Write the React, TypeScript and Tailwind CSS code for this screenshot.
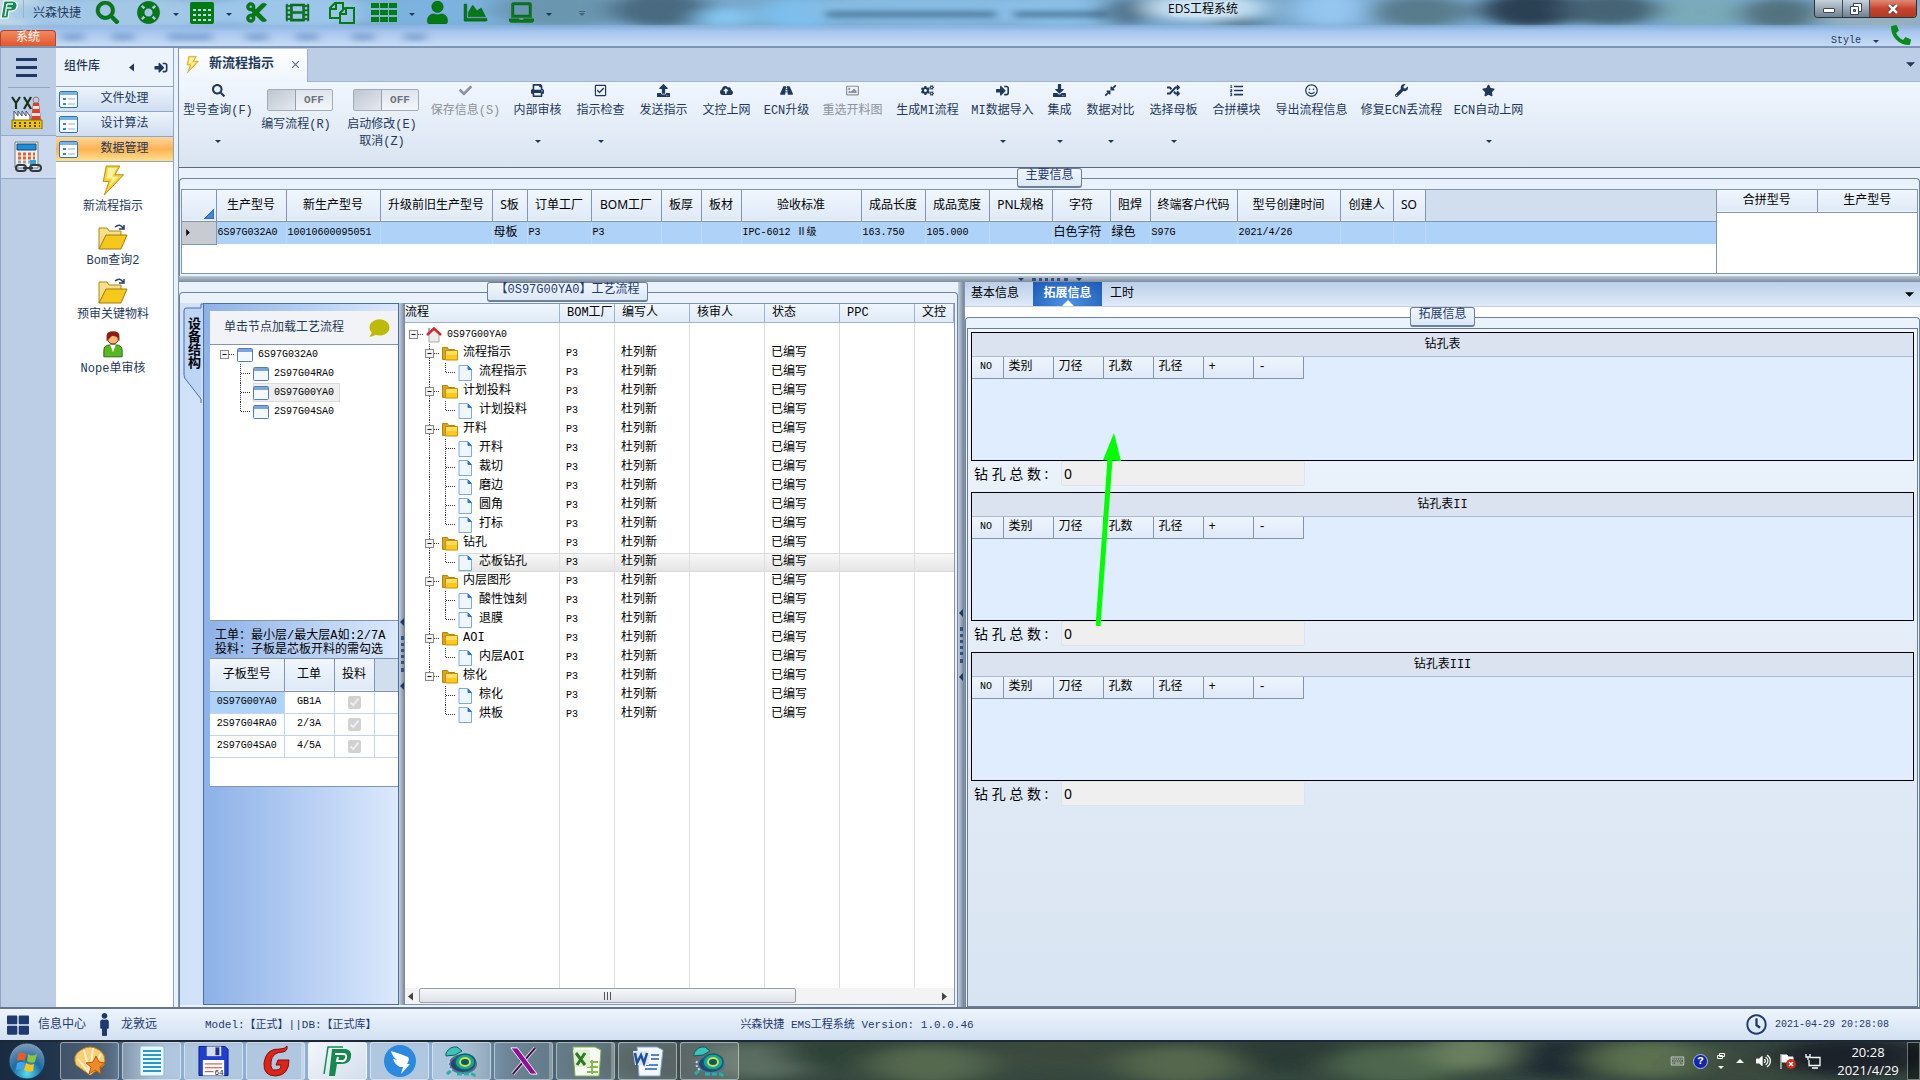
import React, { useState } from 'react';
import type { IconType } from 'react-icons';
import {
    FaSearch, FaLifeRing, FaCut, FaFilm, FaRegCopy, FaTh, FaUser, FaChartArea, FaLaptop, FaPhone,
    FaCheck, FaPrint, FaRegCheckSquare, FaUpload, FaCloudUploadAlt, FaRoad, FaRegImage, FaCogs, FaSignInAlt,
    FaDownload, FaCompressAlt, FaRandom, FaListOl, FaRegSmile, FaWrench, FaStar, FaComment, FaThLarge, FaMale,
    FaRegClock, FaRegKeyboard, FaVolumeUp,
} from 'react-icons/fa';

const Caret: React.FC<{ className?: string }> = ({ className = '' }) => (
    <svg viewBox="0 0 8 4" className={`w-[6px] h-[3px] fill-current shrink-0 ${className}`}><path d="M0 0h8L4 4z" /></svg>
);

/* ---------- title bar ---------- */

const GridIcon: React.FC<{ className?: string }> = () => (
    <svg viewBox="0 0 24 22" className="w-[24px] h-[22px]" aria-hidden="true">
        <rect width="24" height="22" rx="2" fill="currentColor" />
        <path d="M3 7h3v2H3zM8 7h3v2H8zM13 7h3v2h-3zM18 7h3v2h-3zM3 12h3v2H3zM8 12h3v2H8zM13 12h3v2h-3zM18 12h3v2h-3zM3 17h3v2H3zM8 17h3v2H8zM13 17h3v2h-3zM18 17h3v2h-3z" fill="#b9d6ee" />
    </svg>
);

// Two overlapping sheets with cut corners.
const SheetsIcon: React.FC<{ className?: string }> = () => (
    <svg viewBox="0 0 26 23" className="w-[26px] h-[23px]" fill="none" stroke="currentColor" strokeWidth="2" aria-hidden="true">
        <path d="M11 17H1V7l5-5h8v6M1 8h6V2" />
        <path d="M11 12l5-5h9v15H11zM11 13h6V7" />
    </svg>
);

const BarsIcon: React.FC<{ className?: string }> = () => (
    <svg viewBox="0 0 26 20" className="w-[26px] h-[20px]" fill="currentColor" aria-hidden="true">
        <path d="M0 0h8v5H0zM9 0h8v5H9zM18 0h8v5h-8zM0 7h8v5H0zM9 7h8v5H9zM18 7h8v5h-8zM0 14h8v5H0zM9 14h8v5H9zM18 14h8v5h-8z" />
    </svg>
);

const quickTools: { icon: React.ComponentType<{ className?: string }>, label: string, width: string, caret?: boolean }[] = [
    { icon: FaSearch, label: '查找', width: 'w-[41px]' },
    { icon: FaLifeRing, label: '帮助', width: 'w-[54px]', caret: true },
    { icon: GridIcon, label: '表格', width: 'w-[54px]', caret: true },
    { icon: FaCut, label: '剪切', width: 'w-[41px]' },
    { icon: FaFilm, label: '胶片', width: 'w-[44px]' },
    { icon: SheetsIcon, label: '复制', width: 'w-[42px]' },
    { icon: BarsIcon, label: '列表', width: 'w-[54px]', caret: true },
    { icon: FaUser, label: '用户', width: 'w-[38px]' },
    { icon: FaChartArea, label: '图表', width: 'w-[46px]' },
    { icon: FaLaptop, label: '终端', width: 'w-[54px]', caret: true },
];

const glassBlobs = [
    [15, 12, 45, 18, '#cfe1ea'], [120, 14, 120, 18, '#a3c8e6'], [290, 12, 90, 18, '#9cc6ea'], [440, 12, 80, 18, '#7cb2de'],
    [560, 10, 70, 18, '#6a96b0'], [660, 10, 50, 18, '#4a6b80'], [724, 18, 26, 10, '#86c8f2'], [800, 14, 40, 16, '#7cc0ee'],
    [930, 10, 130, 16, '#86bbe2'], [1060, 12, 70, 16, '#8abfe6'], [1125, 12, 24, 14, '#4d6f88'], [1205, 8, 60, 14, '#c4dff2'],
    [1240, 24, 26, 5, '#55788f'], [1330, 10, 36, 18, '#94c6f0'], [1420, 12, 50, 16, '#587c8c'], [1530, 10, 50, 18, '#2a4152'],
    [1610, 10, 50, 16, '#456474'], [1700, 12, 40, 16, '#7aaab8'], [1780, 14, 40, 16, '#527280'], [1880, 18, 60, 16, '#94b0bf'],
] as const;

const Glass: React.FC = () => (
    <svg className="absolute inset-0 w-full h-full" viewBox="0 0 1920 48" preserveAspectRatio="none" aria-hidden="true">
        <defs>
            <filter id="glass" x="-20%" y="-80%" width="140%" height="260%"><feGaussianBlur stdDeviation="14 4" /></filter>
            <filter id="words" x="-20%" y="-80%" width="140%" height="260%"><feGaussianBlur stdDeviation="5 2" /></filter>
            <linearGradient id="glassLow" x1="0" x2="0" y1="0" y2="1">
                <stop offset="0" stopColor="#8fb6e6" stopOpacity="0.5" />
                <stop offset="0.3" stopColor="#a6c5ee" />
                <stop offset="1" stopColor="#c8dcf4" />
            </linearGradient>
        </defs>
        <rect width="1920" height="48" fill="#79a8cc" />
        <g filter="url(#glass)">
            {glassBlobs.map(([x, y, rx, ry, fill], i) => <ellipse key={i} cx={x} cy={y} rx={rx} ry={ry} fill={fill} />)}
        </g>
        <rect y="26" width="1920" height="22" fill="url(#glassLow)" />
        <g filter="url(#words)" fill="#4a78b4" opacity="0.4">
            <rect x="62" y="34" width="22" height="9" />
            <rect x="112" y="34" width="22" height="9" />
            <rect x="168" y="34" width="44" height="9" />
            <rect x="246" y="34" width="22" height="9" />
            <rect x="296" y="34" width="22" height="9" />
            <rect x="352" y="34" width="22" height="9" />
            <rect x="404" y="34" width="22" height="9" />
            <rect x="826" y="11" width="170" height="8" fill="#1e3f60" />
            <rect x="1014" y="11" width="94" height="8" fill="#1e3f60" />
        </g>
    </svg>
);

const FLogo: React.FC<{ className?: string }> = ({ className }) => (
    <svg viewBox="0 0 18 20" className={className} aria-hidden="true">
        <path d="M4 1h9q5 1 4 6-1 4-6 4H9l-1 7H1z" fill="#168a55" stroke="#fff" strokeWidth="1.200" />
        <path d="M7 4h6M7 4L5 16M6.500 8h5" stroke="#e7f6ee" strokeWidth="1.500" fill="none" />
    </svg>
);

const TitleBar: React.FC = () => (
    <header className="relative h-[48px] shrink-0 flex border-b-2 border-[#7b93b5] overflow-hidden">
        <Glass />
        <div className="relative w-1/2 min-w-0">
            <div className="h-[30px] flex items-start">
                <FLogo className="w-[18px] h-[20px]" />
                <span className="w-px h-[18px] mx-[5px] bg-[#9db3c4]" />
                <span className="w-[60px] pl-1 pt-[6px] text-[#1e395b]">兴森快捷</span>
                <div className="pl-[6px] flex text-[#047a12]">
                    {quickTools.map(({ icon: Icon, label, width, caret }) => (
                        <button key={label} aria-label={label} className={`${width} h-[25px] flex items-center justify-start gap-3`}>
                            <Icon className="w-[25px] h-[23px] stroke-[#0a3d10] stroke-[8px]" />
                            {caret && <Caret className="mt-1 text-[#1e395b]" />}
                        </button>
                    ))}
                    <span className="h-[26px] pl-4 flex flex-col justify-center gap-px text-[#44617f]">
                        <span className="w-[6px] h-px bg-current" />
                        <Caret />
                    </span>
                </div>
            </div>
            <button className="block w-[56px] h-[16px] rounded-t-sm border border-b-0 border-[#b1442a] bg-linear-to-b from-[#f08a62] to-[#e2552a] leading-[15px] text-white">系统</button>
        </div>
        <div className="relative w-1/2 min-w-0 pl-[208px] pt-[1px] text-black">
            <div className="w-fit font-['Open_Sans','Noto_Sans_CJK_SC',sans-serif] bg-white/20 rounded-full">EDS工程系统</div>
        </div>
        <div className="absolute right-[3px] top-0 flex h-[18px] rounded-b border border-t-0 border-[#26323e] overflow-hidden">
            <button aria-label="最小化" className="w-[28px] flex items-center justify-center border-r border-[#3d4b59] bg-linear-to-b from-[#c8d3de] to-[#71818f]">
                <span className="w-[12px] h-[5px] mt-1 rounded-[1px] border border-[#3c4754] bg-white" />
            </button>
            <button aria-label="还原" className="w-[27px] flex items-center justify-center border-r border-[#3d4b59] bg-linear-to-b from-[#c8d3de] to-[#71818f]">
                <svg viewBox="0 0 12 12" className="w-[12px] h-[12px]" fill="#fff" stroke="#3c4754"><path d="M3.500.5h8v8h-8z" /><path d="M.5 3.500h8v8h-8z" /><path d="M3.500 6.500h2v2h-2z" fill="#75838f" /></svg>
            </button>
            <button aria-label="关闭" className="w-[46px] flex items-center justify-center bg-linear-to-b from-[#dd8b76] via-[#c8432c] to-[#b03a22]">
                <svg viewBox="0 0 12 10" className="w-[12px] h-[10px]" fill="none"><path d="M2 1l8 8M10 1L2 9" stroke="#4c2a28" strokeWidth="4" /><path d="M2 1l8 8M10 1L2 9" stroke="#fff" strokeWidth="2.500" /></svg>
            </button>
        </div>
        <div className="absolute right-[9px] bottom-0 flex items-center h-[22px] gap-3 text-[#1e395b]">
            <button className="pt-3 flex items-center gap-3 text-[10px] leading-[10px]">Style <Caret /></button>
            <FaPhone className="w-[20px] h-[20px] text-[#0a8a1a] -scale-x-100" />
        </div>
    </header>
);

/* ---------- left side ---------- */

const Factory: React.FC = () => (
    <svg viewBox="0 0 32 34" className="w-[32px] h-[34px]" aria-hidden="true">
        <path d="M1 2l4 6v6M9 2L5 8M13 2l7 12M20 2l-7 12" stroke="#16331c" strokeWidth="2.200" fill="none" />
        <path d="M22 8h6l2 18H20z" fill="#d8402c" />
        <path d="M22 11h6v3h-6zM21 18h8v3h-8z" fill="#f4e3dc" />
        <circle cx="25" cy="5" r="3" fill="#c9ccd4" stroke="#7c8490" />
        <path d="M3 26V16l4 5v-5l4 5v-5l4 5v-5l4 5v5z" fill="#fff" stroke="#44506a" />
        <path d="M1 25h30v9H1z" fill="#edc40c" stroke="#8b6a00" />
        <path d="M3 28h26M3 31h26" stroke="#5d4700" strokeWidth="2" strokeDasharray="2 3" />
    </svg>
);

const Calculator: React.FC = () => (
    <svg viewBox="0 0 30 32" className="w-[30px] h-[32px]" aria-hidden="true">
        <path d="M3 1h23v26H3z" fill="#f1f1f1" stroke="#767c86" />
        <path d="M5 3h19v6H5z" fill="#1c8fd6" stroke="#0d4a77" />
        <path d="M6 13h17M6 17h17" stroke="#e2602c" strokeWidth="3" strokeDasharray="3 2" />
        <path d="M6 21h17" stroke="#9aa3ad" strokeWidth="3" strokeDasharray="3 2" />
        <path d="M18 19h6v6h-6z" fill="#2fa6e4" />
        <g fill="none" stroke="#33383e" strokeWidth="2"><rect x="4" y="24" width="10" height="6" rx="3" /><rect x="18" y="24" width="11" height="6" rx="3" /><path d="M11 27h10" /></g>
    </svg>
);

const Bolt: React.FC<{ className?: string }> = ({ className }) => (
    <svg viewBox="0 0 24 32" className={className} aria-hidden="true">
        <path d="M5 1h14l-5 9h9L3 31l5-14H2z" fill="#fbd22c" stroke="#b58a1c" />
        <path d="M7 3h9l-5 9h7L8 22l3-8H5z" fill="#fff2a6" />
    </svg>
);

const OpenFolder: React.FC = () => (
    <svg viewBox="0 0 30 26" className="w-[30px] h-[26px]" aria-hidden="true">
        <path d="M1 25V4h8l2 3h12v4" fill="#f8e08a" stroke="#a98619" />
        <path d="M1 25L8 11h21l-6 14z" fill="#f7c81c" stroke="#9c7a10" />
        <path d="M17 3q5-4 8 1m1-3v4h-5" fill="none" stroke="#2a3d66" strokeWidth="1.500" />
    </svg>
);

const Person: React.FC = () => (
    <svg viewBox="0 0 24 30" className="w-[22px] h-[28px]" aria-hidden="true">
        <path d="M2 29v-7q0-6 7-6h6q7 0 7 6v7z" fill="#58b820" stroke="#27640a" />
        <path d="M9 16l3 8 3-8z" fill="#fff" />
        <circle cx="12" cy="9" r="6" fill="#f3b878" stroke="#5c1a08" />
        <path d="M5 12V6q0-5 7-5t7 5v6l-3-5-5-1-3 3z" fill="#8e1d0e" />
    </svg>
);

const FormIcon: React.FC = () => (
    <svg viewBox="0 0 19 17" className="w-[19px] h-[17px] shrink-0" aria-hidden="true">
        <rect x=".5" y=".5" width="18" height="16" rx="1.500" fill="#fff" stroke="#2b72b8" />
        <path d="M1 1h17v3H1z" fill="#78b3e6" />
        <path d="M4 7h3v2H4zM4 12h3v2H4z" fill="#3d86c6" />
        <path d="M9 7h7v2H9zM9 12h7v2H9z" fill="#c3d7ea" />
    </svg>
);

const SideRail: React.FC = () => (
    <nav className="w-[56px] shrink-0 border-l border-[#8ea5c6] bg-[#bccde6] flex flex-col items-center">
        <button aria-label="菜单" className="h-[40px] w-[42px] pl-[8px] pr-[13px] border-b border-[#8ea5c6] flex flex-col justify-center gap-[5px]">
            <span className="h-[3px] bg-[#1f3763]" /><span className="h-[3px] bg-[#1f3763]" /><span className="h-[3px] bg-[#1f3763]" />
        </button>
        <button aria-label="YX 工厂" className="h-[48px] w-full pr-[3px] flex items-center justify-center border-b border-[#94aacb]"><Factory /></button>
        <button aria-label="计算" className="h-[43px] w-full pr-[3px] flex items-center justify-center border-b border-[#94aacb] bg-[#cddaed]"><Calculator /></button>
    </nav>
);

const libraryGroups = ['文件处理', '设计算法', '数据管理'];
const libraryItems = [
    { label: '新流程指示', icon: <Bolt className="w-[24px] h-[31px]" /> },
    { label: 'Bom查询2', icon: <OpenFolder /> },
    { label: '预审关键物料', icon: <OpenFolder /> },
    { label: 'Nope单审核', icon: <Person /> },
];

const Library: React.FC = () => {
    const [active, setActive] = useState('数据管理');
    return (
        <aside className="w-[118px] shrink-0 flex flex-col border-r border-[#8ea5c6] bg-white text-[#1e395b]">
            <div className="h-[38px] shrink-0 px-2 pr-[5px] flex items-center bg-[#edf3fb] font-medium">
                <span className="flex-1">组件库</span>
                <svg viewBox="0 0 5 8" className="w-[5px] h-[9px] mr-5 fill-current"><path d="M5 0v8L0 4z" /></svg>
                <FaSignInAlt className="w-[14px] h-[13px]" />
            </div>
            {libraryGroups.map(group => (
                <button
                    key={group}
                    onClick={() => setActive(group)}
                    className={`h-[25px] shrink-0 pl-[3px] flex items-center border-t border-[#8ea5c6] ${group === active ? 'bg-linear-to-b from-[#fcd79c] via-[#fdb251] to-[#fee18e]' : 'bg-linear-to-b from-[#edf4fc] to-[#cfdef0]'}`}
                >
                    <FormIcon />
                    <span className="flex-1 pr-[2px]">{group}</span>
                </button>
            ))}
            <div className="flex-1 border-t border-[#8ea5c6] pr-[3px]">
                {libraryItems.map(item => (
                    <button key={item.label} className="w-full h-[54px] flex flex-col items-center justify-end">
                        {item.icon}
                        <span className="leading-[18px] mt-[2px]">{item.label}</span>
                    </button>
                ))}
            </div>
        </aside>
    );
};

/* ---------- ribbon ---------- */

type Tool = { label: string, icon: IconType, width: string, caret?: boolean, disabled?: boolean };

const tools: Tool[] = [
    { label: '保存信息(S)', icon: FaCheck, width: 'w-[81px]', disabled: true },
    { label: '内部审核', icon: FaPrint, width: 'w-[63px]', caret: true },
    { label: '指示检查', icon: FaRegCheckSquare, width: 'w-[63px]', caret: true },
    { label: '发送指示', icon: FaUpload, width: 'w-[63px]' },
    { label: '文控上网', icon: FaCloudUploadAlt, width: 'w-[63px]' },
    { label: 'ECN升级', icon: FaRoad, width: 'w-[57px]' },
    { label: '重选开料图', icon: FaRegImage, width: 'w-[75px]', disabled: true },
    { label: '生成MI流程', icon: FaCogs, width: 'w-[75px]' },
    { label: 'MI数据导入', icon: FaSignInAlt, width: 'w-[75px]', caret: true },
    { label: '集成', icon: FaDownload, width: 'w-[39px]', caret: true },
    { label: '数据对比', icon: FaCompressAlt, width: 'w-[63px]', caret: true },
    { label: '选择母板', icon: FaRandom, width: 'w-[63px]', caret: true },
    { label: '合拼模块', icon: FaListOl, width: 'w-[63px]' },
    { label: '导出流程信息', icon: FaRegSmile, width: 'w-[87px]' },
    { label: '修复ECN丢流程', icon: FaWrench, width: 'w-[93px]' },
    { label: 'ECN自动上网', icon: FaStar, width: 'w-[81px]', caret: true },
];

const ToolButton: React.FC<Tool> = ({ label, icon: Icon, width, caret, disabled }) => (
    <button disabled={disabled} className={`${width} shrink-0 pt-[2px] flex flex-col items-center disabled:text-[#8d9299]`}>
        <Icon className="w-[13px] h-[13px]" />
        <span className="mt-[5px] leading-[18px] whitespace-nowrap">{label}</span>
        {caret && <Caret className="mt-[20px]" />}
    </button>
);

const ToggleTool: React.FC<{ lines: string[], width: string }> = ({ lines, width }) => {
    const [on, setOn] = useState(false);
    return (
        <div className={`${width} shrink-0 pt-[7px] flex flex-col items-center text-center`}>
            <button onClick={() => setOn(!on)} aria-pressed={on} aria-label={lines[0]} className="w-[66px] h-[22px] flex rounded-[2px] border border-[#a3abb7] bg-linear-to-b from-[#dfe4ec] to-[#f4f6fa]">
                <span className="w-[28px] border-r border-[#98a0ac] bg-linear-to-br from-[#bfc6d1] to-[#e5e9ef]" />
                <span className="flex-1 leading-[20px] text-[11px] font-bold text-[#6c7480]">{on ? 'ON' : 'OFF'}</span>
            </button>
            <span className="mt-[6px] pr-2 leading-[17px]">{lines.map(l => <span key={l} className="block">{l}</span>)}</span>
        </div>
    );
};

const Ribbon: React.FC = () => (
    <div className="shrink-0 text-[#1e395b]">
        <div className="h-[34px] flex items-end justify-between border-b border-[#a3b6d1] bg-[#bccde6]">
            <div className="h-[33px] w-[129px] -mb-px pl-[7px] pr-2 pb-[3px] flex items-center border-r border-[#9fb3d0] bg-linear-to-b from-white to-[#eef5fd]">
                <Bolt className="w-[13px] h-[19px]" />
                <span className="ml-[10px] flex-1 text-[13px] font-bold whitespace-nowrap">新流程指示</span>
                <button aria-label="关闭页签" className="text-[#5a6b85]">
                    <svg viewBox="0 0 8 8" className="w-[7px] h-[7px]" stroke="currentColor" strokeWidth="1.300"><path d="M0 0l8 8M8 0L0 8" /></svg>
                </button>
            </div>
            <Caret className="mr-[5px] mb-[14px] w-[9px] h-[5px]" />
        </div>
        <div className="h-[86px] flex bg-linear-to-b from-[#f0f6fe] to-[#d9e4f1] border-b border-[#5c6b80]">
            <ToolButton label="型号查询(F)" icon={FaSearch} width="w-[78px]" caret />
            <ToggleTool lines={['编写流程(R)']} width="w-[86px]" />
            <ToggleTool lines={['启动修改(E)', '取消(Z)']} width="w-[86px]" />
            <div className="flex -ml-1">
                {tools.map(tool => <ToolButton key={tool.label} {...tool} />)}
            </div>
        </div>
    </div>
);

/* ---------- shared pieces ---------- */

const GroupBox: React.FC<{ title: string, className?: string, children: React.ReactNode }> = ({ title, className = '', children }) => (
    <fieldset className={`min-w-0 pt-px border-t border-x rounded-t border-[#6f82a0] ${className}`}>
        <legend className="mx-auto h-[20px] px-[7px] rounded-[3px] border border-[#6d7f99] border-b-2 bg-linear-to-b from-[#f1f6fd] to-[#dce8f6] leading-[15px] text-[#1e3a78]">{title}</legend>
        {children}
    </fieldset>
);

const HSplitter: React.FC = () => (
    <div className="h-[6px] shrink-0 flex items-center justify-center gap-2 bg-linear-to-b from-[#bcc9d9] to-[#7d8b9b] text-[#1f3763]">
        <Caret /><span className="w-[36px] border-t-3 border-dotted border-[#33517f]" /><Caret />
    </div>
);

const VSplitter: React.FC = () => (
    <div className="w-[6px] shrink-0 flex flex-col items-center justify-center gap-[10px] bg-linear-to-r from-[#c3d0e0] to-[#768495] text-[#1f3763]">
        <svg viewBox="0 0 4 8" className="w-[4px] h-[8px] fill-current"><path d="M4 0v8L0 4z" /></svg>
        <span className="h-[36px] border-l-3 border-dotted border-[#33517f]" />
        <svg viewBox="0 0 4 8" className="w-[4px] h-[8px] fill-current"><path d="M4 0v8L0 4z" /></svg>
    </div>
);

/* ---------- main info ---------- */

const infoColumns = [
    { label: '生产型号', value: '6S97G032A0', width: 'w-[70px]' },
    { label: '新生产型号', value: '10010600095051', width: 'w-[94px]' },
    { label: '升级前旧生产型号', value: '', width: 'w-[112px]' },
    { label: 'S板', value: '母板', width: 'w-[35px]' },
    { label: '订单工厂', value: 'P3', width: 'w-[64px]' },
    { label: 'BOM工厂', value: 'P3', width: 'w-[70px]' },
    { label: '板厚', value: '', width: 'w-[40px]' },
    { label: '板材', value: '', width: 'w-[40px]' },
    { label: '验收标准', value: 'IPC-6012 Ⅱ级', width: 'w-[120px]' },
    { label: '成品长度', value: '163.750', width: 'w-[64px]' },
    { label: '成品宽度', value: '105.000', width: 'w-[64px]' },
    { label: 'PNL规格', value: '', width: 'w-[63px]' },
    { label: '字符', value: '白色字符', width: 'w-[58px]' },
    { label: '阻焊', value: '绿色', width: 'w-[40px]' },
    { label: '终端客户代码', value: 'S97G', width: 'w-[87px]' },
    { label: '型号创建时间', value: '2021/4/26', width: 'w-[103px]' },
    { label: '创建人', value: '', width: 'w-[53px]' },
    { label: 'SO', value: '', width: 'w-[32px]' },
];

// Codes and numbers run narrower than the Chinese text beside them.
const textSize = (value: string) => (/^[\u4e00-\u9fa5]+$/.test(value) ? 'text-[12px]' : 'text-[10px]');

const MainInfo: React.FC = () => (
    <div className="shrink-0 h-[108px] flex bg-[#e9f1fb]">
        <GroupBox title="主要信息" className="flex-1 flex flex-col px-px pb-[2px]">
            <div className="h-[85px] flex border border-[#8195b3] bg-white">
                <div className="flex-1 min-w-0 overflow-hidden border-r border-[#8195b3]">
                    <table className="w-full table-fixed border-collapse">
                        <thead>
                            <tr className="h-[31px] bg-linear-to-b from-[#f0f6fd] to-[#dfeaf7] border-b border-[#8195b3]">
                                <th className="w-[34px] border-r border-[#8195b3] align-bottom">
                                    <svg viewBox="0 0 10 10" className="w-[10px] h-[10px] ml-auto mr-[2px] mb-[2px]"><path d="M10 0v10H0z" fill="#3f86dc" stroke="#2a61ad" /></svg>
                                </th>
                                {infoColumns.map(col => (
                                    <th key={col.label} className={`${col.width} border-r border-[#8195b3] font-normal whitespace-nowrap font-['Noto_Sans','Noto_Sans_CJK_SC',sans-serif]`}>{col.label}</th>
                                ))}
                                <th className="bg-[#d0deee]" />
                            </tr>
                        </thead>
                        <tbody>
                            <tr className="h-[23px] bg-[#aed2f8]">
                                <td className="border-r border-b border-[#8195b3] bg-[#c8ccd2]">
                                    <svg viewBox="0 0 4 8" className="w-[4px] h-[7px] ml-1"><path d="M0 0l4 4-4 4z" /></svg>
                                </td>
                                {infoColumns.map(col => (
                                    <td key={col.label} className={`border-r border-[#bfdaf5] pl-px leading-[16px] whitespace-nowrap ${textSize(col.value)}`}>{col.value}</td>
                                ))}
                                <td />
                            </tr>
                        </tbody>
                    </table>
                </div>
                <table className="w-[200px] table-fixed border-collapse self-start">
                    <thead>
                        <tr className="h-[22px] bg-linear-to-b from-[#f0f6fd] to-[#dfeaf7] border-b border-[#8195b3]">
                            <th className="border-r border-[#8195b3] font-normal">合拼型号</th>
                            <th className="font-normal">生产型号</th>
                        </tr>
                    </thead>
                </table>
            </div>
        </GroupBox>
    </div>
);

/* ---------- trees ---------- */

type Guide = 'none' | 'line' | 'tee' | 'end' | 'root' | 'open' | 'openEnd';

// One 16px tree slot; slots that hold a branch reach 5px further to the icon.
const GuideSlot: React.FC<{ kind: Guide }> = ({ kind }) => {
    const wide = kind !== 'none' && kind !== 'line';
    const box = kind === 'root' || kind === 'open' || kind === 'openEnd';
    return (
        <svg width={wide ? 21 : 16} height="19" className="shrink-0" fill="none" stroke="#333" strokeDasharray="1 1" aria-hidden="true">
            {kind !== 'none' && kind !== 'root' && <path d={kind === 'end' || kind === 'openEnd' ? 'M8.500 0v10' : 'M8.500 0v19'} />}
            {wide && <path d="M9 9.500h9" />}
            {box && <rect x="4.500" y="5.500" width="8" height="8" fill="#f2f2f2" stroke="#8a8a8a" strokeDasharray="none" />}
            {box && <path d="M6.500 9.500h4" stroke="#111" strokeDasharray="none" />}
        </svg>
    );
};

const WindowIcon: React.FC = () => (
    <svg viewBox="0 0 16 14" className="w-[16px] h-[14px] shrink-0" aria-hidden="true">
        <rect x=".5" y=".5" width="15" height="13" rx="1" fill="#f3f9ff" stroke="#527cb8" />
        <path d="M1 1h14v3H1z" fill="#7ba5dc" />
    </svg>
);

const HomeIcon: React.FC = () => (
    <svg viewBox="0 0 16 16" className="w-[16px] h-[16px] shrink-0" aria-hidden="true">
        <path d="M3 7l5-5 5 5v8H3z" fill="#ececec" stroke="#a9a9a9" />
        <path d="M2 1h2v4H2z" fill="#aaa" />
        <path d="M1 8l7-6.500L15 8" fill="none" stroke="#d3272a" strokeWidth="2.500" />
    </svg>
);

const FolderIcon: React.FC = () => (
    <svg viewBox="0 0 16 15" className="w-[16px] h-[15px] shrink-0" aria-hidden="true">
        <path d="M.5 1.500h5l1 2h6v10H.5z" fill="#d9a520" stroke="#b38510" />
        <path d="M3.500 4.500h12v9.500h-12z" fill="#ffc81e" stroke="#c4900c" />
        <path d="M4 5h11v4H4z" fill="#ffdf5e" />
    </svg>
);

const FileIcon: React.FC = () => (
    <svg viewBox="0 0 14 16" className="w-[14px] h-[16px] mr-[2px] shrink-0" aria-hidden="true">
        <path d="M1 .5h9l3.500 4V15.500H1z" fill="#eef6ff" stroke="#7aa9e8" />
        <path d="M10 1v3.500h3.500z" fill="#2e74d0" stroke="#2e74d0" />
    </svg>
);

const boards = ['2S97G04RA0', '0S97G00YA0', '2S97G04SA0'];

const BoardTree: React.FC = () => (
    <div className="h-[277px] shrink-0 pl-[6px] border-t border-[#8195b3] border-b bg-white text-[10px] leading-[19px]">
        <div className="h-[19px] flex items-center gap-0">
            <GuideSlot kind="root" /><WindowIcon /><span className="pl-[5px]">6S97G032A0</span>
        </div>
        {boards.map((board, i) => (
            <div key={board} className="h-[19px] flex items-center">
                <GuideSlot kind="none" />
                <GuideSlot kind={i === boards.length - 1 ? 'end' : 'tee'} />
                <button className={`h-[19px] pr-[6px] flex items-center ${i === 1 ? 'bg-[#efefef] ring-1 ring-inset ring-[#dcdcdc]' : ''}`}>
                    <WindowIcon /><span className="pl-[5px]">{board}</span>
                </button>
            </div>
        ))}
    </div>
);

const workOrders = [
    { board: '0S97G00YA0', order: 'GB1A' },
    { board: '2S97G04RA0', order: '2/3A' },
    { board: '2S97G04SA0', order: '4/5A' },
];

const DevicePanel: React.FC = () => (
    <div className="w-[219px] shrink-0 flex bg-linear-to-r from-[#cfe1f8] to-[#eaf2fc]">
        <div className="relative w-[23px] shrink-0">
            <svg viewBox="0 0 23 100" className="absolute top-0 left-0 w-[23px] h-[100px]" aria-hidden="true">
                <path d="M23 1h-2v4H6q-2 0-2 3v64q0 3 3 6l14 18v4" fill="#bdd6f8" stroke="#4a6ea8" />
            </svg>
            <span className="relative block mt-[14px] ml-[3px] w-[18px] [writing-mode:vertical-rl] font-bold text-[13px] leading-[18px]">设备结构</span>
        </div>
        <div className="flex-1 min-w-0 pl-[6px] pt-[7px] flex flex-col border border-[#4a6ea8] bg-linear-to-r from-[#8db1e7] to-[#dbe9fc]">
            <div className="h-[33px] shrink-0 pl-[14px] pr-[6px] flex items-center justify-between bg-[#f2f3f6] text-[#1e395b]">
                <span>单击节点加载工艺流程</span>
                <FaComment className="w-[25px] h-[20px] text-[#bcbc08]" />
            </div>
            <BoardTree />
            <div className="pl-[5px] pt-2 pb-px leading-[14px] text-[12px] whitespace-nowrap overflow-hidden">
                <p>工单：最小层/最大层A如:2/7A</p>
                <p>投料：子板是芯板开料的需勾选</p>
            </div>
            <div className="h-[129px] shrink-0 border-y border-[#8195b3] bg-white">
                <table className="w-full table-fixed border-collapse text-center">
                    <thead>
                        <tr className="h-[32px] bg-linear-to-b from-[#f0f6fd] to-[#dfeaf7] border-b border-[#8195b3]">
                            <th className="w-[74px] border-r border-[#8195b3] font-normal">子板型号</th>
                            <th className="w-[50px] border-r border-[#8195b3] font-normal">工单</th>
                            <th className="w-[40px] border-r border-[#8195b3] font-normal">投料</th>
                            <th className="bg-[#d0deee]" />
                        </tr>
                    </thead>
                    <tbody>
                        {workOrders.map((row, i) => (
                            <tr key={row.board} className="h-[22px] border-b border-[#c3d3e8] text-[10px]">
                                <td className={`border-r border-[#c3d3e8] ${i === 0 ? 'bg-[#aed2f8]' : ''}`}>{row.board}</td>
                                <td className="border-r border-[#c3d3e8]">{row.order}</td>
                                <td className="border-r border-[#c3d3e8]">
                                    <input type="checkbox" checked disabled aria-label={`投料 ${row.board}`} className="block mx-auto w-[13px] h-[13px]" />
                                </td>
                                <td />
                            </tr>
                        ))}
                    </tbody>
                </table>
            </div>
        </div>
    </div>
);

const processes = [
    { name: '流程指示', steps: ['流程指示'] },
    { name: '计划投料', steps: ['计划投料'] },
    { name: '开料', steps: ['开料', '裁切', '磨边', '圆角', '打标'] },
    { name: '钻孔', steps: ['芯板钻孔'] },
    { name: '内层图形', steps: ['酸性蚀刻', '退膜'] },
    { name: 'AOI', steps: ['内层AOI'] },
    { name: '棕化', steps: ['棕化', '烘板'] },
];

const processRows = processes.flatMap((process, p) => {
    const lastProcess = p === processes.length - 1;
    return [
        { name: process.name, folder: true, guides: ['none', lastProcess ? 'openEnd' : 'open'] as Guide[] },
        ...process.steps.map((step, s) => ({
            name: step,
            folder: false,
            guides: ['none', lastProcess ? 'none' : 'line', s === process.steps.length - 1 ? 'end' : 'tee'] as Guide[],
        })),
    ];
});

const ProcessGrid: React.FC = () => {
    const [selected, setSelected] = useState('芯板钻孔');
    const line = 'border-r border-[#dedede]';
    return (
        <div className="flex-1 min-w-0 flex flex-col border border-[#8195b3] border-l-0 bg-white overflow-hidden">
            <table className="flex-none w-full table-fixed border-separate border-spacing-0">
                <thead>
                    <tr className="h-[19px] text-left">
                        {[['流程', 'w-[155px]'], ['BOM工厂', 'w-[55px] pl-[7px]'], ['编写人', 'w-[75px] pl-[7px]'], ['核审人', 'w-[75px] pl-[7px]'], ['状态', 'w-[75px] pl-[7px]'], ['PPC', 'w-[75px] pl-[7px]'], ['文控', 'pl-[7px]']].map(([label, cls]) => (
                            <th key={label} className={`${cls} h-[19px] leading-[16px] whitespace-nowrap overflow-hidden font-normal border-r border-b border-[#9fb3d0] bg-linear-to-b from-[#f0f6fd] to-[#dfeaf7]`}>{label}</th>
                        ))}
                    </tr>
                </thead>
                <tbody>
                    <tr className="h-[21px]">
                        <td className={`${line} h-[21px] align-bottom`}>
                            <div className="h-[19px] flex items-center text-[10px]">
                                <GuideSlot kind="root" /><HomeIcon /><span className="pl-[5px]">0S97G00YA0</span>
                            </div>
                        </td>
                        <td className={line} /><td className={line} /><td className={line} /><td className={line} /><td className={line} /><td />
                    </tr>
                    {processRows.map((row, i) => {
                        const on = !row.folder && row.name === selected;
                        const fill = on ? 'bg-linear-to-b from-[#f8f8f8] to-[#e4e4e4] shadow-[inset_0_1px_#dadada,inset_0_-1px_#dadada]' : '';
                        return (
                            <tr key={i} className="h-[19px] leading-[17px]" onClick={() => setSelected(row.name)}>
                                <td className={`${line} h-[19px] p-0`}>
                                    <div className="h-[19px] flex items-center">
                                        {row.guides.map((kind, g) => <GuideSlot key={g} kind={kind} />)}
                                        <span className={`flex-1 h-[19px] flex items-center whitespace-nowrap ${fill}`}>
                                            {row.folder ? <FolderIcon /> : <FileIcon />}
                                            <span className="pl-[5px]">{row.name}</span>
                                        </span>
                                    </div>
                                </td>
                                <td className={`${line} ${fill} pl-[6px] text-[10px]`}>P3</td>
                                <td className={`${line} ${fill} pl-[6px]`}>杜列新</td>
                                <td className={`${line} ${fill}`} />
                                <td className={`${line} ${fill} pl-[6px]`}>已编写</td>
                                <td className={`${line} ${fill}`} />
                                <td className={fill} />
                            </tr>
                        );
                    })}
                </tbody>
            </table>
            <div className="flex-1 flex">
                <span className={`${line} w-[155px]`} /><span className={`${line} w-[55px]`} />
                <span className={`${line} w-[75px]`} /><span className={`${line} w-[75px]`} /><span className={`${line} w-[75px]`} /><span className={`${line} w-[75px]`} />
            </div>
            <div className="h-[16px] shrink-0 px-[3px] flex items-center bg-[#f3f3f3] text-[#444]">
                <svg viewBox="0 0 5 8" className="w-[5px] h-[9px] fill-current"><path d="M5 0v8L0 4z" /></svg>
                <span className="flex-1 mx-[6px] h-[16px]">
                    <span className="w-[73%] h-[15px] flex items-center justify-center gap-[2px] rounded-[2px] border border-[#9a9fa7] bg-linear-to-b from-[#f6f7f9] to-[#dfe2e7]">
                        <i className="w-px h-[8px] bg-[#555]" /><i className="w-px h-[8px] bg-[#555]" /><i className="w-px h-[8px] bg-[#555]" />
                    </span>
                </span>
                <svg viewBox="0 0 5 8" className="w-[5px] h-[9px] mr-1 fill-current"><path d="M0 0v8l5-4z" /></svg>
            </div>
        </div>
    );
};

/* ---------- drill tables ---------- */

const DrillTable: React.FC<{ id: string, title: string }> = ({ id, title }) => (
    <section className="mb-[6px]">
        <div className="h-[129px] border border-black bg-[#e0edfe]">
            <h3 className="h-[24px] leading-[24px] text-center border-b border-[#a9bbd6] bg-[#dce3f0]">{title}</h3>
            <table className="table-fixed w-[331px] border-collapse text-left">
                <thead>
                    <tr className="h-[21px] bg-linear-to-b from-[#eef4fc] to-[#dfeaf8]">
                        <th className="w-[31px] pl-2 font-normal text-[10px] border-r border-b border-[#8195b3]">NO</th>
                        {['类别', '刀径', '孔数', '孔径', '+', '-'].map(label => (
                            <th key={label} className="w-[50px] pl-[5px] leading-[18px] font-normal border-r border-b border-[#8195b3]">{label}</th>
                        ))}
                    </tr>
                </thead>
            </table>
        </div>
        <div className="h-[25px] flex items-center font-['Noto_Sans','Noto_Sans_CJK_SC',sans-serif] text-[14px]">
            <label htmlFor={id} className="w-[90px] pl-[3px] whitespace-pre">钻 孔 总 数 :</label>
            <input id={id} readOnly value="0" className="w-[244px] h-[25px] pl-[2px] border border-[#dbe5ee] rounded-[2px] bg-[#efefef] outline-none" />
        </div>
    </section>
);

const ExtendPane: React.FC = () => {
    const [tab, setTab] = useState('拓展信息');
    return (
        <div className="relative flex-1 min-w-0 flex flex-col border-l border-[#8195b3] bg-white">
            <div className="h-[25px] shrink-0 flex items-stretch bg-linear-to-b from-[#bccfe9] to-[#dfeaf8] border-b border-[#c3d1e3]">
                {['基本信息', '拓展信息', '工时'].map(name => (
                    <button
                        key={name}
                        onClick={() => setTab(name)}
                        className={`relative ${name === tab ? 'w-[69px] font-bold text-white bg-radial-[at_50%_90%] from-[#4b93e6] to-[#1c58b4]' : name === '工时' ? 'px-2' : 'w-[68px] pr-[8px]'} leading-[20px]`}
                    >
                        {name}
                        {name === tab && <span className="absolute left-1/2 -ml-[6px] bottom-0 border-x-6 border-b-6 border-x-transparent border-b-white" />}
                    </button>
                ))}
                <Caret className="ml-auto mr-[6px] self-center w-[9px] h-[5px] text-black" />
            </div>
            <GroupBox title="拓展信息" className="flex-1 flex flex-col bg-[#eaf2fc]">
                <div className="flex-1 mx-px p-[3px] border border-[#6b7c96] bg-linear-to-b from-[#eef5fe] to-[#d8e4f1]">
                    <DrillTable id="drill1" title="钻孔表" />
                    <DrillTable id="drill2" title="钻孔表II" />
                    <DrillTable id="drill3" title="钻孔表III" />
                </div>
            </GroupBox>
            <svg viewBox="0 0 26 196" className="absolute left-[131px] top-[151px] w-[26px] h-[196px] pointer-events-none" aria-hidden="true">
                <path d="M2 193L14 26" stroke="#0f0" strokeWidth="5" />
                <path d="M18 0l7 28-18-1z" fill="#0f0" />
            </svg>
        </div>
    );
};

/* ---------- bottom bars ---------- */

const StatusBar: React.FC = () => (
    <footer className="h-[33px] shrink-0 grid grid-cols-[1fr_auto_1fr] items-center border-t-2 border-[#66758a] bg-linear-to-b from-[#edf4fd] to-[#d3e1f2] text-[#1e3a6e]">
        <div className="flex items-center pl-[7px]">
            <FaThLarge className="w-[22px] h-[22px]" />
            <span className="ml-[9px] w-[59px]">信息中心</span>
            <FaMale className="w-[15px] h-[23px]" />
            <span className="ml-[9px] w-[84px]">龙敦远</span>
            <span className="text-[11px]">Model:【正式】||DB:【正式库】</span>
        </div>
        <span className="mr-[206px] text-[11px] text-center">兴森快捷 EMS工程系统 Version: 1.0.0.46</span>
        <div className="flex items-center justify-end gap-2 pr-[31px]">
            <FaRegClock className="w-[21px] h-[21px]" />
            <time className="text-[10px]">2021-04-29 20:28:08</time>
        </div>
    </footer>
);

const Lizard = (
    <svg viewBox="0 0 34 32" className="w-[34px] h-[32px]">
        <ellipse cx="18" cy="19" rx="13" ry="9" fill="#28436e" stroke="#5b6f96" strokeWidth="2" />
        <ellipse cx="20" cy="17" rx="10" ry="8" fill="#1aa39c" stroke="#0c6468" strokeWidth="1.500" />
        <ellipse cx="20" cy="17" rx="5" ry="4" fill="#0c5b60" stroke="#cfe04a" strokeWidth="2" />
        <path d="M1 8q4-7 11-6l5 4-7 4-9 1z" fill="#3cc4b8" stroke="#0c5b60" />
        <path d="M2 29l6-5M12 29h15l4 2" stroke="#20b4a8" strokeWidth="3" fill="none" strokeDasharray="5 2" />
        <path d="M4 16q-2 6 4 10" stroke="#c9d3ea" strokeWidth="2" fill="none" strokeDasharray="2 2" />
    </svg>
);

const taskItems: { label: string, look: 'dim' | 'lit' | 'front', stacked?: boolean, icon: React.ReactNode }[] = [
    { label: '贝壳', look: 'dim', icon: (
        <svg viewBox="0 0 34 32" className="w-[34px] h-[32px]">
            <path d="M17 30L3 20Q-1 10 8 5q9-6 18 0 8 5 5 15z" fill="#f8cf74" stroke="#c98320" />
            <path d="M17 29L5 14M17 29L11 5M17 29l3-26M17 29L28 9" stroke="#fff3cf" strokeWidth="2" />
            <path d="M23 11l3 6 6 1-5 4 1 7-6-4-6 4 2-7-5-4 7-1z" fill="#ef8a24" stroke="#b9580c" />
        </svg>
    ) },
    { label: '记事本', look: 'lit', icon: (
        <svg viewBox="0 0 26 32" className="w-[26px] h-[32px]">
            <rect x="1" y="1" width="24" height="30" rx="2" fill="#eaf8fd" stroke="#8db7cc" />
            <path d="M4 6h18M4 10h18M4 14h18M4 18h18M4 22h18M4 26h18" stroke="#2b97c6" strokeWidth="2" />
        </svg>
    ) },
    { label: '磁盘工具', look: 'lit', icon: (
        <svg viewBox="0 0 32 32" className="w-[31px] h-[32px]">
            <path d="M1 1h27l3 3v27H1z" fill="#1f3fd0" stroke="#0d1f7c" />
            <path d="M9 1h15v10H9z" fill="#d8dde6" /><path d="M18 2h4v8h-4z" fill="#1b2f8c" />
            <path d="M5 15h22v16H5z" fill="#fff" />
            <path d="M7 19h18M7 23h18M7 27h9" stroke="#c23a3a" />
            <text x="17" y="30" fontSize="8" fill="#222">64</text>
        </svg>
    ) },
    { label: 'Genesis', look: 'lit', stacked: true, icon: (
        <svg viewBox="0 0 28 32" className="w-[28px] h-[32px]">
            <path d="M25 1q1 5-4 6-11 0-12 10-1 9 5 8 5 0 5-5h-5l2-5h11q0 15-13 16Q1 31 2 18 4 3 18 4q5 0 7-3z" fill="#dc2418" stroke="#8a0d08" />
        </svg>
    ) },
    { label: 'EDS工程系统', look: 'front', icon: (
        <svg viewBox="0 0 30 32" className="w-[30px] h-[32px]">
            <path d="M9 4h14q6 1 5 8-1 7-9 7h-5l-2 12H6z" fill="#17894f" />
            <path d="M12 9h8q4 0 3 4t-5 3h-4l1-4" stroke="#fff" strokeWidth="2" fill="none" />
            <path d="M20 2H5L1 29" stroke="#17894f" strokeWidth="1.500" fill="none" />
        </svg>
    ) },
    { label: '钉钉', look: 'lit', icon: (
        <svg viewBox="0 0 32 32" className="w-[32px] h-[32px]">
            <circle cx="16" cy="16" r="16" fill="#2b8ae0" />
            <path d="M7 6q10 3 17 6 2 2-1 7h3l-9 10 2-7h-3q-5-2-7-8l4 1Q8 11 7 6z" fill="#fff" />
        </svg>
    ) },
    { label: 'InCAM', look: 'lit', icon: Lizard },
    { label: 'Xmanager', look: 'dim', stacked: true, icon: (
        <svg viewBox="0 0 32 32" className="w-[32px] h-[30px]">
            <path d="M28 2L4 30" stroke="#e8d8ea" strokeWidth="4" />
            <path d="M28 2L4 30" stroke="#3a0d44" strokeWidth="2" />
            <path d="M2 2h7l21 28h-7z" fill="#8d0f9c" stroke="#fff" />
        </svg>
    ) },
    { label: 'Excel', look: 'dim', stacked: true, icon: (
        <svg viewBox="0 0 32 32" className="w-[32px] h-[32px]">
            <path d="M3 2h22l6 3-2 26H5z" fill="#f7faf2" stroke="#7fb04c" />
            <path d="M17 17h11M17 22h11M17 27h11M22 15v14" stroke="#88b850" strokeWidth="2" />
            <path d="M3 5h17v17H5z" fill="#e3efd2" /><path d="M6 8l9 12M15 8L7 20" stroke="#2c7a24" strokeWidth="3" />
        </svg>
    ) },
    { label: 'Word', look: 'dim', icon: (
        <svg viewBox="0 0 32 32" className="w-[32px] h-[32px]">
            <path d="M5 2h20l6 3-3 26H7z" fill="#f4f8fd" stroke="#7da2d6" />
            <path d="M19 10h8M19 14h8M14 20h12M13 24h12" stroke="#5685c8" strokeWidth="2" />
            <path d="M1 6h16v14H3z" fill="#dbe7f7" /><path d="M3 8l2 10 4-8 3 8 3-10" stroke="#1f4f9f" strokeWidth="2.500" fill="none" />
        </svg>
    ) },
    { label: 'InCAM 2', look: 'dim', icon: Lizard },
];

const taskLook = {
    dim: 'bg-white/15',
    lit: 'bg-white/30',
    front: 'bg-linear-to-br from-white/90 to-white/60',
};

const forest = [
    [660, 20, 50, '#3d4a48'], [760, 20, 50, '#5c6f62'], [840, 10, 60, '#2f4238'], [930, 24, 60, '#54694f'], [1060, 12, 70, '#3a4a3c'], [1180, 24, 60, '#55684e'],
    [1290, 12, 60, '#2b3a34'], [1400, 24, 70, '#4e664e'], [1470, 10, 40, '#6a8060'], [1560, 18, 50, '#1f2c32'], [1650, 18, 60, '#5a6f50'],
    [1750, 26, 60, '#3a493c'], [1850, 16, 80, '#1a242a'],
] as const;

const Taskbar: React.FC = () => (
    <div className="relative h-[40px] shrink-0 flex items-stretch overflow-hidden border-t-2 border-[#1d2a36] bg-linear-to-r from-[#182a40] via-[#5c7fa2] via-20% to-[#35473f] to-40% text-white">
        <svg className="absolute inset-0 w-full h-full" viewBox="0 0 1920 40" preserveAspectRatio="none" aria-hidden="true">
            <filter id="leaf" x="-10%" y="-60%" width="120%" height="220%"><feGaussianBlur stdDeviation="20 5" /></filter>
            <g filter="url(#leaf)">
                {forest.map(([x, y, r, fill]) => <ellipse key={x} cx={x} cy={y} rx={r} ry="20" fill={fill} />)}
                <rect x="130" y="-4" width="350" height="50" fill="#8fb0d2" />
            </g>
        </svg>
        <button aria-label="开始" className="relative w-[60px] flex items-center pl-2">
            <svg viewBox="0 0 38 38" className="w-[38px] h-[38px]">
                <defs><radialGradient id="orb" cx=".5" cy=".85" r=".8"><stop offset="0" stopColor="#56dff5" /><stop offset=".5" stopColor="#1c6ba4" /><stop offset="1" stopColor="#7b98b4" /></radialGradient></defs>
                <circle cx="19" cy="19" r="18" fill="url(#orb)" stroke="#1a3650" />
                <path d="M10 12q4-3 8 0l-1 7q-4-2-8 0z" fill="#ee5a24" /><path d="M20 12q4 3 9 0l-2 8q-4 2-8-1z" fill="#8cc63e" />
                <path d="M9 21q4-2 8 0l-2 7q-3-2-7 0z" fill="#3fa6ea" /><path d="M18 21q4 3 8 1l-1 7q-5 2-9-1z" fill="#fcc41c" />
            </svg>
        </button>
        <div className="relative flex gap-[3px]">
            {taskItems.map(item => (
                <button
                    key={item.label}
                    aria-label={item.label}
                    className={`w-[59px] flex items-center justify-center rounded-[3px] border border-white/45 ${taskLook[item.look]} ${item.stacked ? 'shadow-[inset_-4px_0_0_-1px_rgba(255,255,255,0.25)]' : ''}`}
                >
                    {item.icon}
                </button>
            ))}
        </div>
        <div className="relative ml-auto flex items-center">
            <FaRegKeyboard className="w-[15px] h-[12px] text-[#c3c8cc]" />
            <span className="ml-2 w-[15px] h-[15px] rounded-full border border-[#aeb9e8] bg-[#1226a8] text-[11px] leading-[13px] text-center font-bold">?</span>
            <span className="ml-[9px] w-2 flex flex-col items-center gap-[7px]">
                <svg viewBox="0 0 8 6" className="w-[8px] h-[6px]" fill="none" stroke="#fff"><path d="M2.500.5h5v3h-5zM.5 2.500h5v3h-5z" /></svg>
                <Caret />
            </span>
            <svg viewBox="0 0 8 4" className="ml-[11px] w-[8px] h-[4px] fill-white"><path d="M0 4h8L4 0z" /></svg>
            <FaVolumeUp className="ml-3 w-[15px] h-[14px]" />
            <svg viewBox="0 0 16 16" className="ml-[9px] w-[16px] h-[16px]"><path d="M1 1v15M2 2h5l1 2h5v6H8L7 9H2z" fill="#fff" stroke="#fff" /><circle cx="11" cy="11" r="5" fill="#d2281c" /><path d="M9 9l4 4M13 9l-4 4" stroke="#fff" strokeWidth="1.500" /></svg>
            <svg viewBox="0 0 16 16" className="ml-[9px] w-[16px] h-[16px]" fill="none" stroke="#fff" strokeWidth="1.300"><path d="M5 4.500h10v8H4V7M7 15h6M1 1v3h4V1M3 4v3" /></svg>
            <div className="w-[78px] ml-2 text-center text-[13px] leading-[18px] font-['Open_Sans','Noto_Sans',sans-serif]">
                <div>20:28</div>
                <div>2021/4/29</div>
            </div>
            <button aria-label="显示桌面" className="w-[13px] h-full border border-white/40 bg-black/40" />
        </div>
    </div>
);

const App: React.FC = () => (
    <div className="h-screen min-w-[1500px] flex flex-col overflow-hidden bg-[#e9f1fb] text-[12px] leading-[16px] text-black font-['Liberation_Mono','Noto_Sans_CJK_SC',monospace]">
        <TitleBar />
        <div className="flex-1 min-h-0 flex">
            <SideRail />
            <Library />
            <main className="flex-1 min-w-0 ml-[4px] border-l border-[#8195b3] flex flex-col">
                <Ribbon />
                <MainInfo />
                <HSplitter />
                <div className="flex-1 min-h-0 flex">
                    <div className="flex-[779_779_0%] min-w-0 flex">
                        <GroupBox title="【0S97G00YA0】工艺流程" className="flex-1 flex flex-col pr-[2px] pb-[2px]">
                            <div className="flex-1 min-h-0 flex">
                                <DevicePanel />
                                <VSplitter />
                                <ProcessGrid />
                            </div>
                        </GroupBox>
                    </div>
                    <VSplitter />
                    <div className="flex-[956_956_0%] min-w-0 flex">
                        <ExtendPane />
                    </div>
                </div>
            </main>
        </div>
        <StatusBar />
        <Taskbar />
    </div>
);

export default App;
